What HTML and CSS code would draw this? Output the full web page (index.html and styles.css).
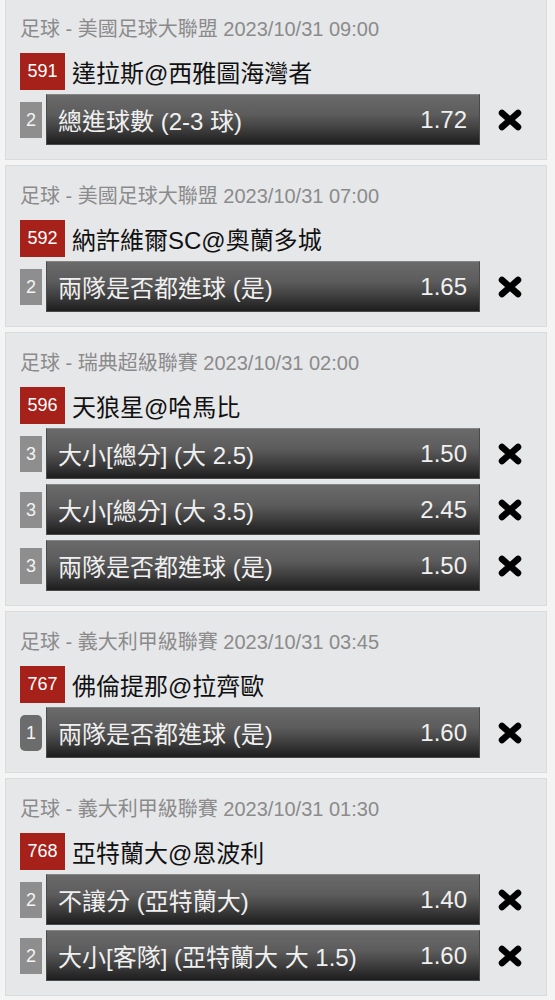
FILE: index.html
```html
<!DOCTYPE html>
<html lang="zh-Hant">
<head>
    <meta charset="UTF-8">
    <meta name="viewport" content="width=device-width, initial-scale=1.0">
    <title>投注單</title>
    <link rel="stylesheet" href="styles.css">
</head>
<body>
    <div class="slip">
        <div class="card">
            <div class="league">足球 - 美國足球大聯盟 2023/10/31 09:00</div>
            <div class="match"><span class="code">591</span><span class="teams">達拉斯@西雅圖海灣者</span></div>
            <div class="bets">
                <div class="bet">
                    <span class="pass">2</span>
                    <div class="bar"><span>總進球數 (2-3 球)</span><span>1.72</span></div>
                    <svg class="remove" width="26" height="22" viewBox="0 0 26 22"><path d="M5 4 L21 18 M21 4 L5 18"/></svg>
                </div>
            </div>
        </div>

        <div class="card">
            <div class="league">足球 - 美國足球大聯盟 2023/10/31 07:00</div>
            <div class="match"><span class="code">592</span><span class="teams">納許維爾SC@奧蘭多城</span></div>
            <div class="bets">
                <div class="bet">
                    <span class="pass">2</span>
                    <div class="bar"><span>兩隊是否都進球 (是)</span><span>1.65</span></div>
                    <svg class="remove" width="26" height="22" viewBox="0 0 26 22"><path d="M5 4 L21 18 M21 4 L5 18"/></svg>
                </div>
            </div>
        </div>

        <div class="card">
            <div class="league">足球 - 瑞典超級聯賽 2023/10/31 02:00</div>
            <div class="match"><span class="code">596</span><span class="teams">天狼星@哈馬比</span></div>
            <div class="bets">
                <div class="bet">
                    <span class="pass">3</span>
                    <div class="bar"><span>大小[總分] (大 2.5)</span><span>1.50</span></div>
                    <svg class="remove" width="26" height="22" viewBox="0 0 26 22"><path d="M5 4 L21 18 M21 4 L5 18"/></svg>
                </div>
                <div class="bet">
                    <span class="pass">3</span>
                    <div class="bar"><span>大小[總分] (大 3.5)</span><span>2.45</span></div>
                    <svg class="remove" width="26" height="22" viewBox="0 0 26 22"><path d="M5 4 L21 18 M21 4 L5 18"/></svg>
                </div>
                <div class="bet">
                    <span class="pass">3</span>
                    <div class="bar"><span>兩隊是否都進球 (是)</span><span>1.50</span></div>
                    <svg class="remove" width="26" height="22" viewBox="0 0 26 22"><path d="M5 4 L21 18 M21 4 L5 18"/></svg>
                </div>
            </div>
        </div>

        <div class="card">
            <div class="league">足球 - 義大利甲級聯賽 2023/10/31 03:45</div>
            <div class="match"><span class="code">767</span><span class="teams">佛倫提那@拉齊歐</span></div>
            <div class="bets">
                <div class="bet">
                    <span class="pass single">1</span>
                    <div class="bar"><span>兩隊是否都進球 (是)</span><span>1.60</span></div>
                    <svg class="remove" width="26" height="22" viewBox="0 0 26 22"><path d="M5 4 L21 18 M21 4 L5 18"/></svg>
                </div>
            </div>
        </div>

        <div class="card">
            <div class="league">足球 - 義大利甲級聯賽 2023/10/31 01:30</div>
            <div class="match"><span class="code">768</span><span class="teams">亞特蘭大@恩波利</span></div>
            <div class="bets">
                <div class="bet">
                    <span class="pass">2</span>
                    <div class="bar"><span>不讓分 (亞特蘭大)</span><span>1.40</span></div>
                    <svg class="remove" width="26" height="22" viewBox="0 0 26 22"><path d="M5 4 L21 18 M21 4 L5 18"/></svg>
                </div>
                <div class="bet">
                    <span class="pass">2</span>
                    <div class="bar"><span>大小[客隊] (亞特蘭大 大 1.5)</span><span>1.60</span></div>
                    <svg class="remove" width="26" height="22" viewBox="0 0 26 22"><path d="M5 4 L21 18 M21 4 L5 18"/></svg>
                </div>
            </div>
        </div>
    </div>
</body>
</html>
```

FILE: styles.css
```css
body {
    margin: 0;
    padding: 0;
    background-color: #f4f4f5;
    font-family: "Liberation Sans", Arial, "Noto Sans CJK TC", sans-serif;
}

.slip {
    margin-top: -2px;
    padding: 0 8px 0 5px;
}

.card {
    background-color: #e6e7e9;
    border: 1px solid #dadbdd;
    padding: 18px 23px 14px 14px;
    margin-bottom: 5px;
}

.league {
    font-size: 20px;
    line-height: 24px;
    color: #8b8b8b;
    white-space: nowrap;
}

.match {
    display: flex;
    align-items: center;
    margin-top: 12px;
    height: 37px;
}

.code {
    width: 45px;
    height: 37px;
    line-height: 37px;
    text-align: center;
    font-size: 18px;
    color: #fff;
    background-color: #a6211a;
}

.teams {
    margin-left: 7px;
    font-size: 24px;
    color: #111;
}

.bets {
    margin-top: 4px;
    display: flex;
    flex-direction: column;
    gap: 5px;
}

.bet {
    display: flex;
    align-items: center;
}

.pass {
    width: 22px;
    height: 36px;
    line-height: 36px;
    text-align: center;
    font-size: 18px;
    color: #f4f4f4;
    background-color: #8e8e8e;
    margin-right: 4px;
}

.pass.single {
    background-color: #6c6c6c;
    border-radius: 5px;
}

.bar {
    flex: 1;
    height: 49px;
    display: flex;
    align-items: center;
    justify-content: space-between;
    padding: 0 12px 0 11px;
    font-size: 24px;
    color: #f0f0f0;
    white-space: nowrap;
    border: 1px solid #4a4a4a;
    border-top-color: #858585;
    background: linear-gradient(to bottom, #6a6a6a 0%, #5c5c5c 40%, #3e3e3e 70%, #1d1d1d 100%);
}

.remove {
    margin-left: 17px;
    flex-shrink: 0;
}

.remove path {
    stroke: #000;
    stroke-width: 6.5;
    stroke-linecap: round;
    fill: none;
}
```
